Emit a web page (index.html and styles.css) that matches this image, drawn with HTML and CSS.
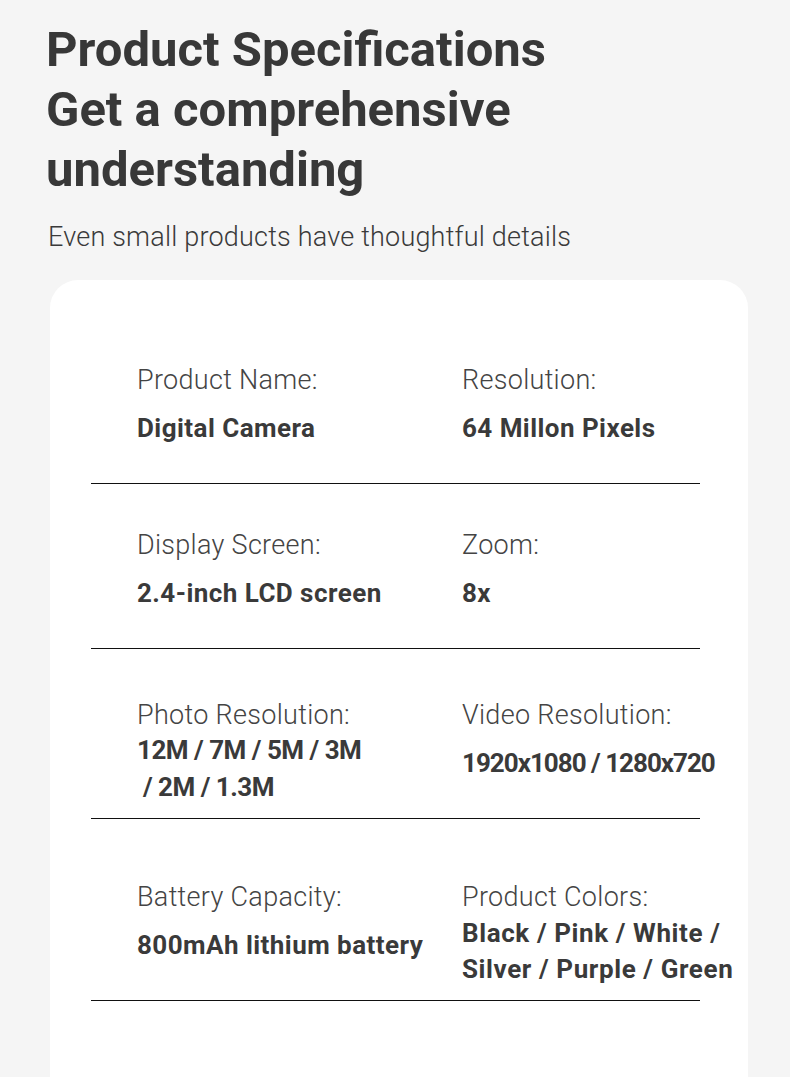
FILE: index.html
```html
<!DOCTYPE html>
<html lang="en">
<head>
<meta charset="utf-8">
<title>Product Specifications</title>
<link rel="stylesheet" href="styles.css">
</head>
<body>
<header class="intro">
  <h1 class="title">Product Specifications<br>Get a comprehensive<br>understanding</h1>
  <p class="subtitle">Even small products have thoughtful details</p>
</header>
<section class="card">
  <div class="row row-first">
    <div class="cell">
      <div class="label">Product Name:</div>
      <div class="value">Digital Camera</div>
    </div>
    <div class="cell">
      <div class="label">Resolution:</div>
      <div class="value">64 Millon Pixels</div>
    </div>
  </div>
  <div class="row">
    <div class="cell">
      <div class="label">Display Screen:</div>
      <div class="value">2.4-inch LCD screen</div>
    </div>
    <div class="cell">
      <div class="label">Zoom:</div>
      <div class="value">8x</div>
    </div>
  </div>
  <div class="row row-photo">
    <div class="cell">
      <div class="label">Photo Resolution:</div>
      <div class="value value-tight">12M / 7M / 5M / 3M<br>&nbsp;/ 2M / 1.3M</div>
    </div>
    <div class="cell">
      <div class="label">Video Resolution:</div>
      <div class="value value-digits">1920x1080 / 1280x720</div>
    </div>
  </div>
  <div class="row row-battery">
    <div class="cell">
      <div class="label">Battery Capacity:</div>
      <div class="value">800mAh lithium battery</div>
    </div>
    <div class="cell">
      <div class="label">Product Colors:</div>
      <div class="value value-list">Black / Pink / White /<br>Silver / Purple / Green</div>
    </div>
  </div>
</section>
</body>
</html>
```
FILE: styles.css
```css
html, body {
  margin: 0;
  padding: 0;
}

body {
  background: #f5f5f5;
  font-family: Roboto, "DejaVu Sans", sans-serif;
  color: #383838;
}

.intro {
  padding: 20px 0 0 46px;
}

.title {
  margin: 0;
  font-size: 49px;
  line-height: 60px;
  font-weight: 700;
  color: #383838;
  letter-spacing: 0;
}

.subtitle {
  margin: 19px 0 0 2px;
  font-size: 27px;
  line-height: 36px;
  font-weight: 300;
  color: #3a3a3a;
  letter-spacing: 0.2px;
}

.card {
  margin: 25px 0 0 50px;
  width: 698px;
  background: #fff;
  border-radius: 28px 28px 0 0;
  padding: 39px 0 120px;
  box-sizing: border-box;
}

.row {
  margin: 0 48px 0 41px;
  padding: 43px 0 37px 46px;
  display: grid;
  grid-template-columns: 325px 1fr;
  align-items: start;
  border-bottom: 1px solid #111;
}

.row-photo {
  padding-top: 48px;
  padding-bottom: 12px;
}

.row-battery {
  padding-top: 60px;
  padding-bottom: 13px;
}

.cell {
  display: flex;
  flex-direction: column;
  gap: 12px;
  white-space: nowrap;
}

.label {
  font-size: 27px;
  line-height: 36px;
  font-weight: 300;
  color: #444;
  letter-spacing: 0.3px;
}

.value {
  font-size: 26px;
  line-height: 36px;
  font-weight: 700;
  color: #3a3a3a;
  letter-spacing: 0.45px;
}

.value-tight {
  line-height: 37px;
  margin-top: -13px;
  letter-spacing: -0.5px;
}

.value-digits {
  letter-spacing: -1px;
}

.value-list {
  margin-top: -12px;
  letter-spacing: 0.6px;
}
```
